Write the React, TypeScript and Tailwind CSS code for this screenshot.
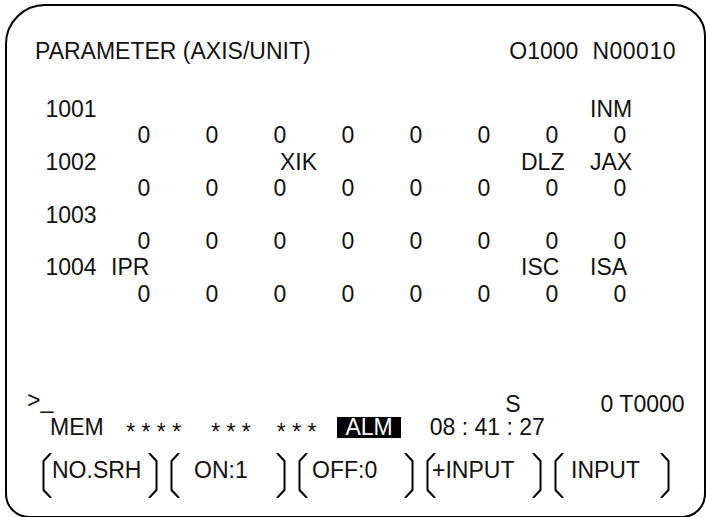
const rows = [
  { no: "1001", bits: ["", "", "", "", "", "", "", "INM"] },
  { no: "1002", bits: ["", "", "XIK", "", "", "", "DLZ", "JAX"] },
  { no: "1003", bits: ["", "", "", "", "", "", "", ""] },
  { no: "1004", bits: ["IPR", "", "", "", "", "", "ISC", "ISA"] },
]

// label indent inside each bit column
const bitPad = ["pl-[1px]", "", "pl-[34px]", "", "", "", "pl-[3px]", "pl-[4px]"]

const softkeys = [
  { label: "NO.SRH", pad: "ml-[-1px]" },
  { label: "ON:1", pad: "ml-[13px]" },
  { label: "OFF:0", pad: "ml-[3px]" },
  { label: "+INPUT", pad: "ml-[-5px]" },
  { label: "INPUT", pad: "ml-[6px]" },
]

function Bracket({ right }: { right?: boolean }) {
  return (
    <svg width="11" height="45" viewBox="0 0 11 45" className="shrink-0">
      <path
        d={right ? "M2 0 L9.5 8 L9.5 37 L2 45" : "M9 0 L1.5 8 L1.5 37 L9 45"}
        fill="none"
        stroke="black"
        strokeWidth="2"
        strokeLinejoin="round"
      />
    </svg>
  )
}

export default function App() {
  return (
    <div className="w-[706px] h-[517px] overflow-hidden bg-white pl-[5px] pt-[4px] font-['Liberation_Sans',Arial,sans-serif] text-[23px] text-[#111]">
      <div className="w-[701px] h-[514px] border-2 border-black rounded-tl-[40px] rounded-tr-[32px] rounded-bl-[24px] rounded-br-[24px] flex flex-col">
        {/* header */}
        <div className="mt-[32px] px-[28px] flex justify-between leading-[26px] whitespace-pre">
          <span>PARAMETER (AXIS/UNIT)</span>
          <span>
            O1000<span className="ml-[14px] tracking-[0.5px]">N00010</span>
          </span>
        </div>

        {/* parameter bits */}
        <div className="mt-[32px] pl-[38.5px] grid grid-cols-[64.5px_repeat(8,68px)] leading-[26.4px]">
          {rows.map((r) => (
            <>
              <span key={r.no}>{r.no}</span>
              {r.bits.map((b, i) => (
                <span key={r.no + "b" + i} className={bitPad[i]}>
                  {b}
                </span>
              ))}
              <span key={r.no + "v"} />
              {r.bits.map((_, i) => (
                <span key={r.no + "v" + i} className="text-center">
                  0
                </span>
              ))}
            </>
          ))}
        </div>

        {/* status lines */}
        <div className="mt-[86px] pl-[20px] flex items-baseline leading-[23px] whitespace-pre">
          <span className="-translate-y-[4px]">&gt;_</span>
          <span className="ml-[452px]">S</span>
          <span className="ml-[80px]">0 T0000</span>
        </div>
        <div className="pl-[43px] flex items-baseline leading-[23px] whitespace-pre">
          <span>MEM</span>
          <span className="ml-[22.5px] translate-y-[5px]">* * * *</span>
          <span className="ml-[30px] translate-y-[5px]">* * *</span>
          <span className="ml-[26px] translate-y-[5px]">* * *</span>
          <span className="ml-[21px] inline-block bg-black text-white px-[8px] leading-[21px]">ALM</span>
          <span className="ml-[29px]">08 : 41 : 27</span>
        </div>

        {/* soft keys */}
        <div className="mt-[14px] pl-[35px] flex gap-[12px]">
          {softkeys.map((k) => (
            <div key={k.label} className="w-[116px] flex items-start">
              <Bracket />
              <span className={"flex-1 mt-[4px] leading-[26px] whitespace-pre " + k.pad}>{k.label}</span>
              <Bracket right />
            </div>
          ))}
        </div>
      </div>
    </div>
  )
}
